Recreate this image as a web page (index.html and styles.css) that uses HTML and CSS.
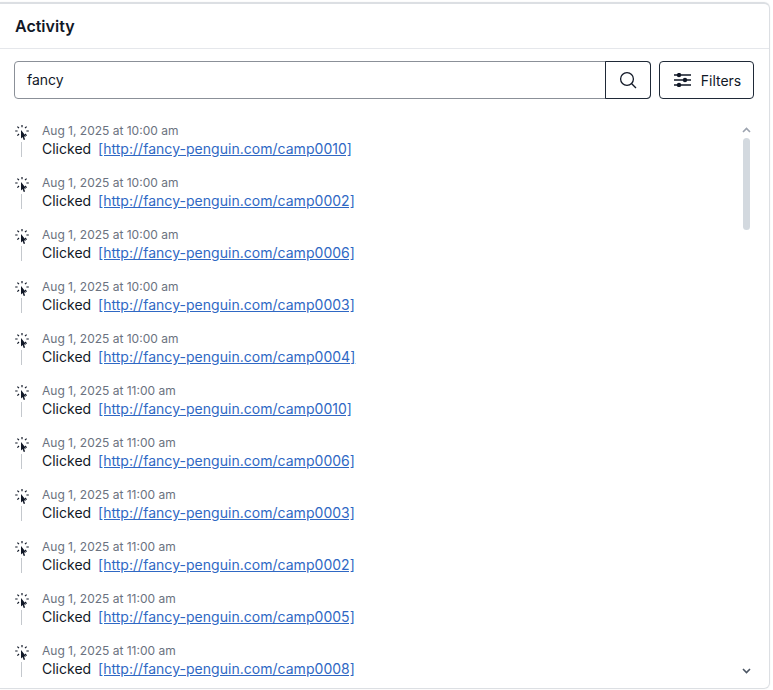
FILE: index.html
```html
<!DOCTYPE html>
<html lang="en">
<head>
<meta charset="utf-8">
<title>Activity</title>
<link rel="stylesheet" href="styles.css">
</head>
<body>
<svg class="defs" width="0" height="0">
  <symbol id="click" viewBox="0 0 16 16">
    <path d="M8 1v2.2M3.4 2.6L5 4.2M12.6 2.6L11 4.2M1.2 7h2.4M12.4 7h2.4M3.4 11.6L5 10M12.6 11.6L11 10" fill="none" stroke="#111827" stroke-width="1.2"/>
    <path d="M7 6v8.6l1.6-1.6 1.1 3 1.4-.6-1.1-2.9h2.2z" fill="#111827"/>
  </symbol>
</svg>
<section class="card">
  <h1 class="title">Activity</h1>
  <div class="toolbar">
    <div class="search">
      <span class="search-text">fancy</span>
      <span class="search-btn">
        <svg width="18" height="18" viewBox="0 0 18 18" fill="none" stroke="#111827" stroke-width="1.3"><circle cx="8" cy="8" r="6.4"/><path d="M12.7 12.7L17 17"/></svg>
      </span>
    </div>
    <button class="filters">
      <svg width="17" height="14" viewBox="0 0 17 14" fill="none" stroke="#111827" stroke-width="1.6"><path d="M0 2h17M0 7h17M0 12h17"/><circle cx="5" cy="2" r="1.4" fill="#111827"/><circle cx="11" cy="7" r="1.4" fill="#111827"/><circle cx="5" cy="12" r="1.4" fill="#111827"/></svg>
      <span>Filters</span>
    </button>
  </div>
  <div class="list-wrap">
    <ul class="list">
      <li class="item"><div class="marker"><svg class="ico"><use href="#click"/></svg><i class="line"></i></div><div><div class="time">Aug 1, 2025 at 10:00 am</div><div class="desc">Clicked <a href="#">[http://fancy-penguin.com/camp0010]</a></div></div></li>
      <li class="item"><div class="marker"><svg class="ico"><use href="#click"/></svg><i class="line"></i></div><div><div class="time">Aug 1, 2025 at 10:00 am</div><div class="desc">Clicked <a href="#">[http://fancy-penguin.com/camp0002]</a></div></div></li>
      <li class="item"><div class="marker"><svg class="ico"><use href="#click"/></svg><i class="line"></i></div><div><div class="time">Aug 1, 2025 at 10:00 am</div><div class="desc">Clicked <a href="#">[http://fancy-penguin.com/camp0006]</a></div></div></li>
      <li class="item"><div class="marker"><svg class="ico"><use href="#click"/></svg><i class="line"></i></div><div><div class="time">Aug 1, 2025 at 10:00 am</div><div class="desc">Clicked <a href="#">[http://fancy-penguin.com/camp0003]</a></div></div></li>
      <li class="item"><div class="marker"><svg class="ico"><use href="#click"/></svg><i class="line"></i></div><div><div class="time">Aug 1, 2025 at 10:00 am</div><div class="desc">Clicked <a href="#">[http://fancy-penguin.com/camp0004]</a></div></div></li>
      <li class="item"><div class="marker"><svg class="ico"><use href="#click"/></svg><i class="line"></i></div><div><div class="time">Aug 1, 2025 at 11:00 am</div><div class="desc">Clicked <a href="#">[http://fancy-penguin.com/camp0010]</a></div></div></li>
      <li class="item"><div class="marker"><svg class="ico"><use href="#click"/></svg><i class="line"></i></div><div><div class="time">Aug 1, 2025 at 11:00 am</div><div class="desc">Clicked <a href="#">[http://fancy-penguin.com/camp0006]</a></div></div></li>
      <li class="item"><div class="marker"><svg class="ico"><use href="#click"/></svg><i class="line"></i></div><div><div class="time">Aug 1, 2025 at 11:00 am</div><div class="desc">Clicked <a href="#">[http://fancy-penguin.com/camp0003]</a></div></div></li>
      <li class="item"><div class="marker"><svg class="ico"><use href="#click"/></svg><i class="line"></i></div><div><div class="time">Aug 1, 2025 at 11:00 am</div><div class="desc">Clicked <a href="#">[http://fancy-penguin.com/camp0002]</a></div></div></li>
      <li class="item"><div class="marker"><svg class="ico"><use href="#click"/></svg><i class="line"></i></div><div><div class="time">Aug 1, 2025 at 11:00 am</div><div class="desc">Clicked <a href="#">[http://fancy-penguin.com/camp0005]</a></div></div></li>
      <li class="item"><div class="marker"><svg class="ico"><use href="#click"/></svg><i class="line"></i></div><div><div class="time">Aug 1, 2025 at 11:00 am</div><div class="desc">Clicked <a href="#">[http://fancy-penguin.com/camp0008]</a></div></div></li>
    </ul>
    <div class="scrollbar">
      <svg width="9" height="6" viewBox="0 0 9 6" fill="none" stroke="#9ca3af" stroke-width="1.6"><path d="M1 5l3.5-3.5L8 5"/></svg>
      <span class="thumb"></span>
      <svg class="down" width="9" height="6" viewBox="0 0 9 6" fill="none" stroke="#4b5563" stroke-width="1.6"><path d="M1 1l3.5 3.5L8 1"/></svg>
    </div>
  </div>
</section>
</body>
</html>
```
FILE: styles.css
```css
* { box-sizing: border-box; }
html, body { margin: 0; height: 100%; background: #fff; }
body { font-family: Inter, "Liberation Sans", sans-serif; color: #111827; padding: 2px 3px 1px 0; overflow: hidden; }
.defs { position: absolute; }
.card { height: 687px; border: 1px solid #dcdfe3; border-top-width: 2px; border-left: 0; border-radius: 0 6px 6px 0; display: flex; flex-direction: column; overflow: hidden; box-shadow: 0 0 2px rgba(0,0,0,.06); }
.title { margin: 0; height: 45px; padding: 0 15px; font-size: 16px; font-weight: 600; line-height: 44px; border-bottom: 1px solid #e5e7eb; }
.toolbar { display: flex; gap: 8px; padding: 12px 15px 0 14px; }
.search { flex: 1; height: 38px; display: flex; border: 1px solid #8b9098; border-radius: 4px; }
.search-text { flex: 1; padding-left: 12px; font-size: 14px; line-height: 35px; }
.search-btn { width: 46px; margin: -1px; display: flex; align-items: center; justify-content: center; border: 1px solid #1f2937; border-radius: 0 4px 4px 0; }
.filters { width: 95px; height: 38px; display: flex; align-items: center; justify-content: center; gap: 10px; background: #fff; border: 1px solid #1f2937; border-radius: 4px; font: 400 14px Inter, sans-serif; color: #111827; padding: 0 0 0 2px; }
.list-wrap { flex: 1; position: relative; min-height: 0; overflow: hidden; }
.list { list-style: none; margin: 0; padding: 24px 0 0 14px; height: 100%; overflow: hidden; }
.item { display: flex; height: 52px; }
.marker { width: 28px; display: flex; flex-direction: column; align-items: flex-start; }
.ico { width: 16px; height: 16px; flex: none; margin-top: 1px; }
.line { width: 1px; height: 15px; margin: 2px 0 0 7px; background: #c4c8cd; }
.time { font-size: 12px; line-height: 18px; color: #6b7280; margin-top: -1px; }
.desc { font-size: 14px; line-height: 18px; word-spacing: 3px; }
.desc a { color: #2f68c4; text-decoration: underline; word-spacing: 0; letter-spacing: .03px; }
.scrollbar { position: absolute; right: 18px; top: 28px; bottom: 14px; width: 9px; display: flex; flex-direction: column; align-items: center; }
.thumb { width: 7px; height: 92px; margin-top: 5px; border-radius: 4px; background: #d3d9df; }
.down { margin-top: auto; }
```
